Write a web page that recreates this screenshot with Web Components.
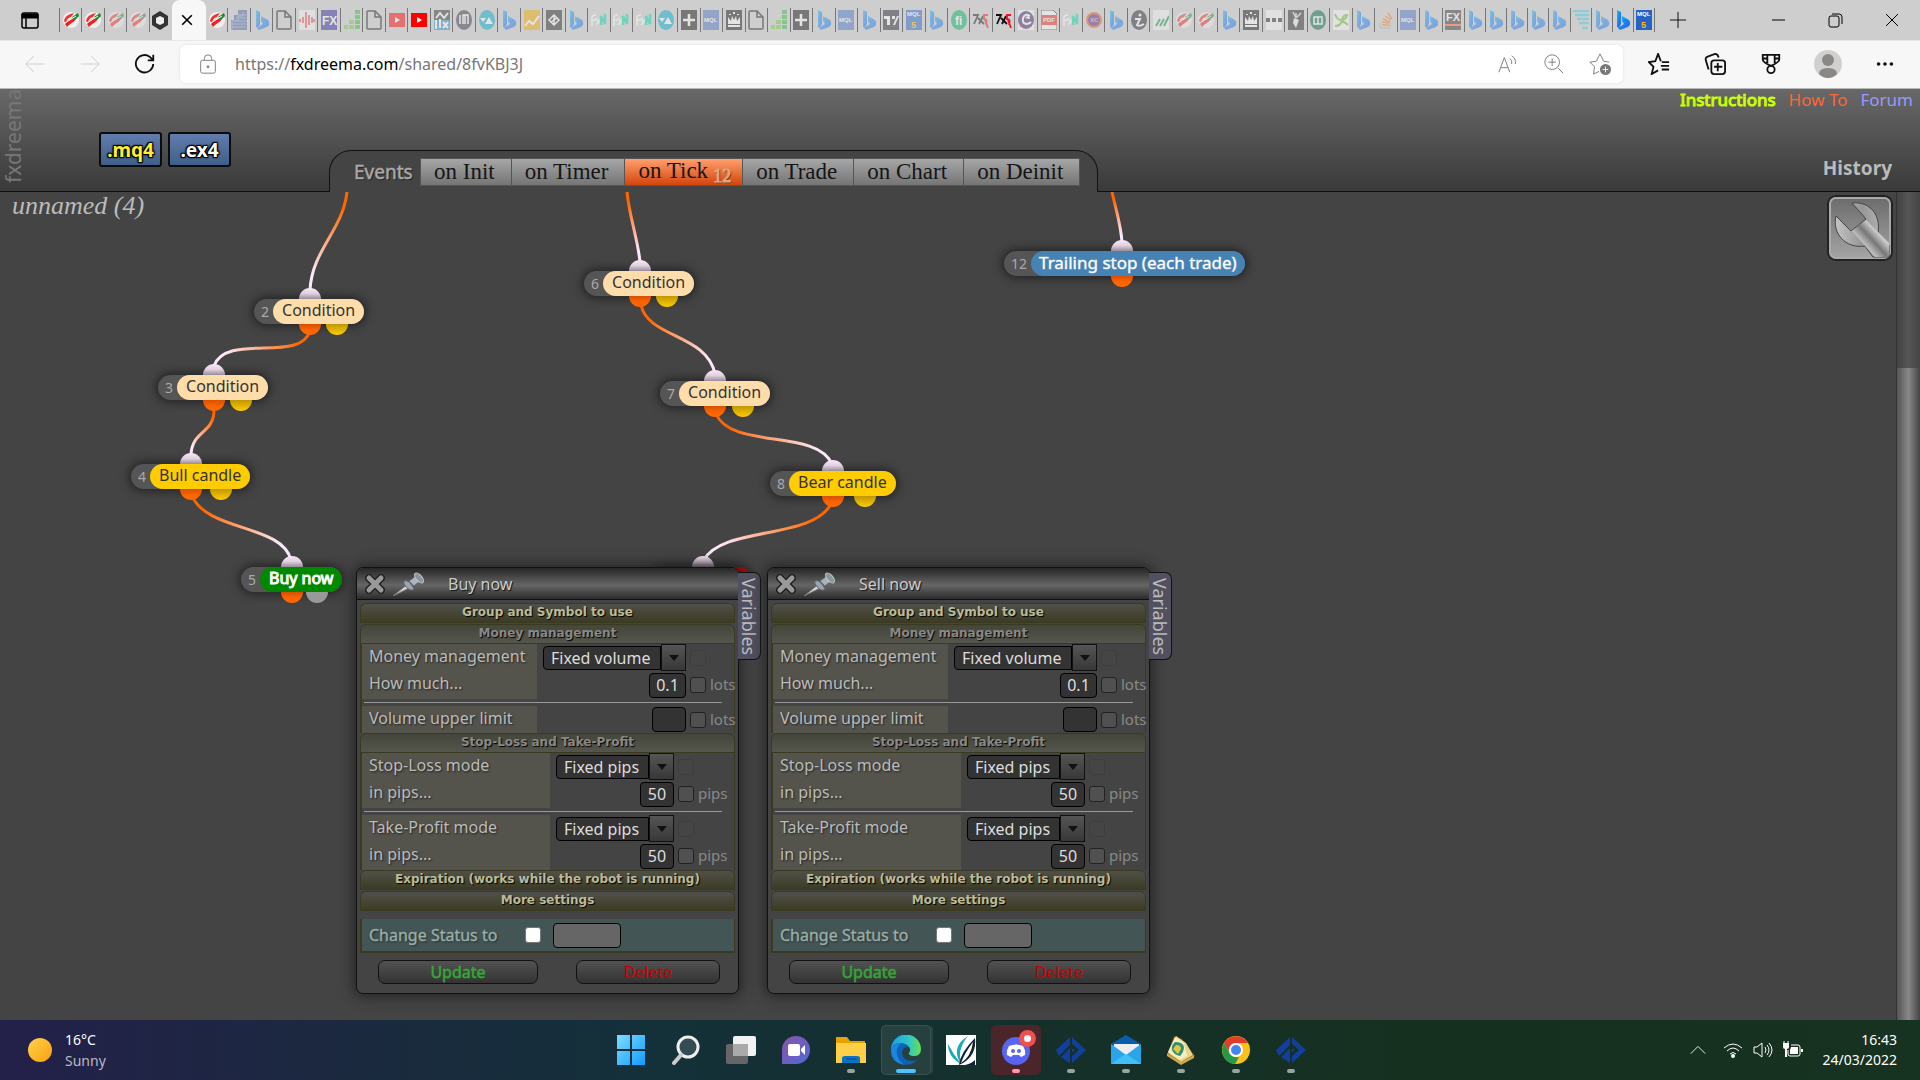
<!DOCTYPE html>
<html lang="en">
<head>
<meta charset="utf-8">
<title>fxDreema</title>
<style>
html, body { margin: 0; height: 100%; }
body { display: flex; flex-direction: column; overflow: hidden; background: #444; color: #aaa; font-family: "Noto Sans", "Open Sans", sans-serif; font-size: 16px; }
event-canvas { flex: 1; min-height: 0; }
</style>
</head>
<body>
<browser-tabs></browser-tabs>
<browser-toolbar></browser-toolbar>
<app-header></app-header>
<event-canvas>
  <flow-wires></flow-wires>
  <flow-node num="2" x="254" y="107" kind="condition" port="45" port2="72">Condition</flow-node>
  <flow-node num="3" x="158" y="183" kind="condition" port="45" port2="72">Condition</flow-node>
  <flow-node num="4" x="131" y="272" kind="candle" port="49" port2="79">Bull candle</flow-node>
  <flow-node num="5" x="241" y="375" kind="buy" port="40" port2="65">Buy now</flow-node>
  <flow-node num="6" x="584" y="79" kind="condition" port="45" port2="72">Condition</flow-node>
  <flow-node num="7" x="660" y="189" kind="condition" port="44" port2="72">Condition</flow-node>
  <flow-node num="8" x="770" y="279" kind="candle" port="52" port2="84">Bear candle</flow-node>
  <flow-node num="9" x="652" y="375" kind="sell" port="40" port2="65">Sell now</flow-node>
  <flow-node num="12" x="1004" y="59" kind="trail" port="107">Trailing stop (each trade)</flow-node>
  <block-panel x="356" y="375">Buy now</block-panel>
  <block-panel x="767" y="375">Sell now</block-panel>
</event-canvas>
<task-bar></task-bar>

<script>
function component(name, html, setup) {
  const template = document.createElement('template');
  template.innerHTML = html;
  customElements.define(name, class extends HTMLElement {
    constructor() {
      super();
      this.attachShadow({ mode: 'open' }).append(template.content.cloneNode(true));
    }
    connectedCallback() { if (setup) setup(this, this.shadowRoot); }
  });
}

/* ---------- favicons, drawn in a 16x20 box ---------- */
const square = (fill, inner = '') => `<path fill="${fill}" d="M0 0h16v20H0z"/>${inner}`;
const word = (t, x, y, size, fill) => `<text x="${x}" y="${y}" font-size="${size}" fill="${fill}" font-weight="700">${t}</text>`;
const favicons = {
  dreema: `<ellipse cx="8" cy="10" rx="8" ry="8" fill="#eee"/><path d="M1 11C2 6 6 4 11 3L8 7C5 8 4 9 3 13z" fill="#e33"/><path d="M2 14c2-4 5-4 9-7l2 1c-1 4-4 4-9 9z" fill="#e22"/><path d="M9 7l6-4 1 3-4 4z" fill="#283"/><path d="M2 13L13 6" stroke="#fff"/>`,
  hex: `<path d="M8 1l8 5v9l-8 5-8-5V6z" fill="#333"/><path d="M8 6l4 2v5l-4 2-4-2V8z" fill="#eee"/>`,
  building: square('#4a63a8', '<path d="M0 0h7v5H3v5H0z" fill="#cecece"/><path d="M1 20V11h6V6h5V2M1 14h14M1 17h14M5 8h10M7 5h8M4 11h12" stroke="#93a3d0" stroke-width="1" fill="none"/>'),
  bing: `<defs><linearGradient id="b" x2="1" y2="1"><stop stop-color="#1cc4f5"/><stop offset=".5" stop-color="#1783f0"/><stop offset="1" stop-color="#2a66e8"/></linearGradient></defs><path fill="url(#b)" d="M2 0l4 2v12l-2 4-2-1z"/><path fill="url(#b)" d="M7 6l7 4q2 2 1 5l-2 2-8 3-2-2 6-4-2-3z"/>`,
  doc: `<path d="M1 2q0-1 1-1h7l6 6v11q0 1-1 1H2q-1 0-1-1zM9 1v6h6" fill="none" stroke="#111" stroke-width="1.500"/>`,
  wave: square('#f4f4f4', '<path d="M1 9v3M4 7v6M7 2v16M10 5v10M13 7v6M15 9v3" stroke="#e22" stroke-width="1.500"/>'),
  fx: square('#2a2a9c', word('FX', 1, 15, 12, '#fff')),
  bars: `<path d="M0 15h4v4H0zM5 15h5v4H5zM5 10h5v4H5z" fill="#7c4"/><path d="M11 0h5v4h-5zM11 5h5v4h-5zM11 10h5v4h-5zM11 15h5v4h-5z" fill="#3b4"/>`,
  yt: `<path fill="#f00" d="M0 3h16v14H0z"/><path d="M6 7l5 3-5 3z" fill="#fff"/>`,
  cpx: square('#333', '<path d="M0 10h16v10H0z" fill="#28c"/><path d="M2 10v9M6 9v9M9 12l5 6M14 12l-5 6M2 8l4-5 4 5 4-5" stroke="#fff" stroke-width="2" fill="none"/>'),
  im: `<ellipse cx="8" cy="10" rx="8" ry="10" fill="#334"/><path d="M4 5v9M7 14V5h5v9M9 5v9" stroke="#fff" stroke-width="1.500" fill="none"/>`,
  tri: `<ellipse cx="8" cy="10" rx="8" ry="10" fill="#0ac"/><path d="M1 8h6l-3 4zM6 14l4-7 4 7z" fill="#fff"/>`,
  chart: square('#f3a800', '<path d="M1 16l4-5 4 3 6-8" stroke="#fff" stroke-width="2" fill="none"/>'),
  diamond: square('#222', '<path d="M8 5l5 5-5 5-5-5zM8 5v5l-3 2M8 15v-5l3-2" stroke="#fff" stroke-width="1.500" fill="none"/>'),
  fxn: `<path d="M1 16V8q0-3 4-3M0 10h5M5 8l5 7M10 8l-5 7" stroke="#fff" stroke-width="1.500" fill="none"/><path d="M10 15V6l4 8V4" stroke="#0da" stroke-width="2.500" fill="none"/>`,
  plus: square('#111', '<path d="M8 4v12M2 10h12" stroke="#fff" stroke-width="2.500"/>'),
  mql: square('#4a72c4', word('MQL', 1, 12, 6, '#fff')),
  crown: square('#111', '<path d="M2 14V7l3 4 1-5 2 4 2-4 1 5 3-4v7z" fill="#fff"/><path d="M2 16h12M4 4v1M8 2v2M12 4v1" stroke="#fff" stroke-width="2"/>'),
  tv: square('#223', '<path d="M1 6h6v9H4V9H1zM9 6h3v3H9zM16 6l-4 9h-2l4-9z" fill="#fff"/>'),
  mq5: square('#2563c9', word('MQL', 1, 6, 6, '#fff') + word('5', 5, 18, 9, '#fb0')),
  fi: `<ellipse cx="8" cy="10" rx="8" ry="10" fill="#00b060"/>${word('fi', 4, 15, 12, '#fff')}`,
  seven: `<path d="M0 5h5L1 14M5 8l6 6M10 6l-4 8" stroke="#111" stroke-width="1.800" fill="none"/><path d="M15 5h-4v4q4 0 2 6M12 10l3 8" stroke="#e12" stroke-width="1.800" fill="none"/>`,
  cee: square('#fafafa', '<ellipse cx="8" cy="10" rx="8" ry="9" fill="#426"/><path d="M12 6q-5-3-7 2-1 5 3 6 3 0 5-2M8 8q3-2 3 1" stroke="#fff" stroke-width="2" fill="none"/>'),
  pdf: `<path d="M0 0h12l4 4v16H0z" fill="#fff" stroke="#222"/><path d="M0 5h16v10H0z" fill="#e22"/>${word('PDF', 2, 12, 6, '#fff')}`,
  xc: `<circle cx="8" cy="10" r="8" fill="#e8590c"/><circle cx="8" cy="10" r="6" fill="#528"/>${word('XC', 4, 12, 6, '#f9a')}`,
  info: `<ellipse cx="8" cy="10" rx="8" ry="10" fill="#223"/><path d="M4 9h5l-3 6q2 2 7-1" stroke="#fff" stroke-width="2" fill="none"/><circle cx="9" cy="5" r="1.500" fill="#fff"/>`,
  slashes: square('#f4f4f4', '<path d="M3 16l4-7M7 16l4-7M11 16l5-10" stroke="#194" stroke-width="2"/>'),
  dots: square('#fafafa', '<path d="M0 8h4v4H0zM6 8h4v4H6zM12 8h4v4h-4z" fill="#222"/>'),
  carrot: square('#222', '<path d="M6 8l5 2-3 8-3-5z" fill="#eee"/><path d="M8 8L5 2M8 8l5-5M8 7V3" stroke="#cde" stroke-width="1.500"/>'),
  excel: `<ellipse cx="8" cy="10" rx="8" ry="10" fill="#064"/><path d="M4 7h8v7H4zM8 7v7" stroke="#fff" stroke-width="1.500" fill="none"/>`,
  plant: square('#fafafa', '<path d="M2 4q2 6 6 6 5 0 6-5-4 0-5 5-1 6-7 6M8 11q4 1 7 4" stroke="#7b3" stroke-width="2" fill="none"/>'),
  stack: `<path d="M2 13v5h10v-5" stroke="#aaa" fill="none"/><path d="M4 15h7M4 12l7 1M5 9l7 3M7 6l6 4M10 3l4 6" stroke="#f48024" stroke-width="1.500"/>`,
  fxlib: square('#333', word('FX', 1, 11, 11, '#fff') + '<path d="M0 15h16" stroke="#f62" stroke-width="2"/>'),
  lines: `<path d="M0 1h16M2 5h14M4 9h12M6 13h10M9 18h6" stroke="#4cd" stroke-width="2.500"/>`
};
component('fav-tab', `<style>
:host { flex: 1 1 0; min-width: 0; display: flex; align-items: center; justify-content: center; height: 24px; margin-top: 8px; border-right: 1px solid #777; box-sizing: border-box; }
svg { width: 16px; height: 20px; overflow: hidden; opacity: .45; font-family: "Liberation Sans", sans-serif; }
:host([awake]) svg { opacity: 1; }
</style><svg viewBox="0 0 16 20" aria-hidden="true"></svg>`, (el, root) => {
  root.querySelector('svg').innerHTML = favicons[el.getAttribute('icon')] || '';
});

/* ---------- interface icons ---------- */
const icons = {
  actions: ['0 0 20 20', '<rect x="2" y="3" width="16" height="15" rx="2" fill="none" stroke="#000" stroke-width="1.500"/><path d="M2 4h16v4H2z"/><path d="M6 8v10" stroke="#000" stroke-width="1.500"/>'],
  cross: ['0 0 20 20', '<path d="M4 4l12 12M16 4L4 16"/>'],
  plus: ['0 0 20 20', '<path d="M10 1v18M1 10h18"/>'],
  min: ['0 0 20 20', '<path d="M4 10h13"/>'],
  restore: ['0 0 20 20', '<rect x="4" y="6" width="10" height="11" rx="2"/><path d="M7 4h7q3 0 3 3v7"/>'],
  back: ['0 0 24 24', '<path d="M22 12H2M11 3l-9 9 9 9"/>'],
  forward: ['0 0 24 24', '<path d="M2 12h20M13 3l9 9-9 9"/>'],
  reload: ['0 0 24 24', '<path d="M21 12a9.500 9.500 0 1 1-4-8l3 3M21 2v6h-6"/>'],
  lock: ['0 0 24 24', '<rect x="4" y="8" width="16" height="14" rx="2"/><path d="M8 8V6q0-4 4-4t4 4v2"/><circle cx="12" cy="15" r="1" fill="currentColor"/>'],
  read: ['0 0 24 24', '<path d="M2 21L8 5l6 16M4 16h8M14 6q3 2 2 6M16 3q5 3 4 9"/>'],
  zoom: ['0 0 24 24', '<circle cx="10" cy="10" r="8"/><path d="M16 16l6 6M10 6v8M6 10h8"/>'],
  starplus: ['0 0 24 24', '<path d="M11 20l-6 3 1-8-5-5 7-1 4-8 4 8 6 1"/><circle cx="18" cy="18" r="6" fill="currentColor" stroke="none"/><path d="M18 15v6M15 18h6" stroke="#fff"/>'],
  fav: ['0 0 24 24', '<path d="M14 9L11 1 8 9l-7 1 5 5-2 8 7-4M15 10h8M14 14h9M15 18h8"/>'],
  collect: ['0 0 24 24', '<rect x="8" y="8" width="15" height="15" rx="3"/><path d="M15 11v9M11 15h9M5 18L2 8q-1-3 2-4l8-3q3 0 4 4"/>'],
  medal: ['0 0 24 24', '<path d="M3 2h18v5q0 3-9 7-9-4-9-7zM8 2v9M16 2v9M3 6h5M16 6h5"/><circle cx="12" cy="18" r="4"/>'],
  avatar: ['0 0 28 28', '<g stroke="none"><circle cx="14" cy="14" r="14" fill="#d2d0ce"/><circle cx="14" cy="10" r="6" fill="#8a8886"/><path d="M5 24q0-6 9-6t9 6q-4 4-9 4t-9-4z" fill="#8a8886"/></g>'],
  more: ['0 0 24 24', '<g fill="currentColor" stroke="none"><circle cx="5" cy="12" r="2"/><circle cx="12" cy="12" r="2"/><circle cx="19" cy="12" r="2"/></g>'],
  wrench: ['0 0 66 66', `<defs><linearGradient id="bg" y2="1" x2="0"><stop stop-color="#6c6c6c"/><stop offset="1" stop-color="#a4a4a4"/></linearGradient><linearGradient id="w" x2="1"><stop stop-color="#c4c4c4"/><stop offset=".5" stop-color="#969696"/><stop offset="1" stop-color="#bdbdbd"/></linearGradient><linearGradient id="h" gradientUnits="userSpaceOnUse" x1="37" y1="49" x2="50" y2="37"><stop stop-color="#c0c0c0"/><stop offset=".5" stop-color="#777"/><stop offset="1" stop-color="#ccc"/></linearGradient></defs><rect x="1" y="1" width="64" height="64" rx="8" fill="#666" stroke="#222" stroke-width="2"/><rect x="3" y="3" width="60" height="60" rx="6" fill="url(#bg)" stroke="#aaa" stroke-width="2"/><path d="M25 8C43 6 54 20 51 38L62 50V62H46L38 51C18 54 5 38 9 21L24 36 39 24z" fill="url(#w)" stroke="#444"/><path d="M25 36L39 25 62 48V60L58 62H48z" fill="url(#h)" stroke="none"/>`],
  close: ['0 0 20 20', '<path d="M4 4l12 12M16 4L4 16" stroke="#222" stroke-width="8" stroke-linecap="round"/><path d="M4 4l12 12M16 4L4 16" stroke="#999" stroke-width="5" stroke-linecap="round"/>'],
  pin: ['0 0 32 24', '<path d="M1 24L16 12l3 3z" fill="#ddd" stroke="#777"/><path d="M12 9q5-2 10 8-3 3-8-2-3-4-2-6z" fill="#9aa5ad" stroke="#667"/><path d="M17 9l7-5 4 5-6 5z" fill="#aab3ba" stroke="#667"/><ellipse cx="27" cy="6" rx="3" ry="6" transform="rotate(-40 27 6)" fill="#8b969e" stroke="#bcc"/>'],
  windows: ['0 0 30 30', '<defs><linearGradient id="g" x2="1" y2="1"><stop stop-color="#7fdcff"/><stop offset="1" stop-color="#0f9cff"/></linearGradient></defs><path stroke="none" fill="url(#g)" d="M1 0h13v14H1zM16 0h13v14H16zM1 16h13v14H1zM16 16h13v14H16z"/>'],
  search: ['0 0 30 30', '<circle cx="17" cy="12" r="10" fill="#ffffff22" stroke="#eee" stroke-width="3"/><path d="M10 20l-7 8" stroke="#ccc" stroke-width="4" stroke-linecap="round"/>'],
  tasks: ['0 0 30 30', '<g stroke="none"><rect x="7" y="1" width="23" height="20" rx="2" fill="#f2f2f2"/><rect x="0" y="9" width="22" height="20" rx="2" fill="#666"/><path d="M7 9h15v12H7z" fill="#aaa"/></g>'],
  chat: ['0 0 30 30', '<defs><linearGradient id="g" x2="1" y2="1"><stop stop-color="#8a52a8"/><stop offset="1" stop-color="#4f6bd8"/></linearGradient></defs><g stroke="none"><path d="M1 29V15a14 14 0 1 1 14 14z" fill="url(#g)"/><rect x="7" y="9" width="12" height="12" rx="2" fill="#fff"/><path d="M20 14l4-4v10l-4-4z" fill="#fff"/></g>'],
  folder: ['0 0 30 30', '<g stroke="none"><path d="M0 2h11l3 4h15v8H0z" fill="#e8a200"/><path d="M0 8h30v20H0z" fill="#ffcf48"/><path d="M6 28v-5q0-2 3-2h12q3 0 3 2v5z" fill="#0b73c4"/><path d="M10 24h11" stroke="#034a8a" stroke-width="1"/></g>'],
  edge: ['0 0 30 30', '<defs><linearGradient id="g" x2="1"><stop stop-color="#1a9fe0"/><stop offset=".6" stop-color="#2fc6c8"/><stop offset="1" stop-color="#69e04a"/></linearGradient></defs><g stroke="none"><path d="M0 15a15 15 0 0 1 30-1q0 8-9 7-4-1-3-3 3-4-2-8Q6 6 0 15z" fill="url(#g)"/><path d="M0 15Q2 7 11 8q5 1 6 4-6 0-6 6 1 8 10 8 4 0 6-2Q20 32 10 29 0 25 0 15z" fill="#0c62b8"/><path d="M0 15q1-8 11-7-7 4-5 12 2 7 8 10Q0 28 0 15z" fill="#1a86dd"/></g>'],
  quill: ['0 0 30 30', '<g stroke="none"><path d="M0 0h30v30H0z" fill="#fff"/><path d="M2 9q0 13 13 20Q7 19 2 9z" fill="#1ab"/><path d="M22 1Q4 12 15 29 11 14 22 1z" fill="#19a9b8"/><path d="M29 3Q14 18 13 30 31 22 29 3z" fill="#123"/><path d="M27 7q-9 12-12 21 10-6 12-21z" fill="#fff"/><path d="M29 25q-4 4-10 5h10z" fill="#123"/></g>'],
  discord: ['0 0 30 30', '<g stroke="none"><circle cx="15" cy="16" r="14" fill="#5865f2"/><path d="M8 11q7-3 14 0 3 5 2 9l-4 2-2-2h-6l-2 2-4-2q-1-4 2-9z" fill="#fff"/><circle cx="12" cy="16" r="2" fill="#5865f2"/><circle cx="18" cy="16" r="2" fill="#5865f2"/></g>'],
  blade: ['0 0 30 30', '<g stroke="none" fill="#123f9c"><path d="M14 2v8l-6 6-5 5-3-6z"/><path d="M5 22l9-9v15z"/><path d="M16 2l14 13-14 13v-7l7-6-7-6z"/><path d="M16 14h3l-3 4z"/></g>'],
  mail: ['0 0 30 30', '<g stroke="none"><path d="M0 9L15 0l15 9v5H0z" fill="#0a5da8"/><path d="M3 9h25v12H3z" fill="#eee"/><path d="M0 9l15 11L30 9v20H0z" fill="#2aa5ea"/><path d="M0 29l15-10 15 10z" fill="#41c0f5"/></g>'],
  book: ['0 0 30 30', '<g stroke="none"><path d="M8 1l8 3 13 17-13 8L1 20z" fill="#7a5a18"/><path d="M10 1l10 7 7 12-12 7L2 18z" fill="#e8d38a"/><path d="M9 2l9 6 3 13-7 4L2 17z" fill="#f8edc0"/><path d="M9 7q8 0 9 5 0 5-4 9-6-1-8-6-1-5 3-8z" fill="#2f8f77"/><path d="M10 10q5 0 5 4l-3 5-5-5z" fill="#e7c63a"/><path d="M1 18l14 9 13-7v3l-13 7L1 21z" fill="#d0a848"/></g>'],
  chrome: ['0 0 30 30', '<g stroke="none"><circle cx="15" cy="15" r="14" fill="#fbc116"/><path d="M3 8a14 14 0 0 1 24 0H15a7 7 0 0 0-6 11z" fill="#e33b2e"/><path d="M3 8l6 11q3 4 9 3l-4 7A14 14 0 0 1 3 8z" fill="#219b4b"/><circle cx="15" cy="15" r="7" fill="#fff"/><circle cx="15" cy="15" r="5" fill="#4285f4"/></g>'],
  sun: ['0 0 30 30', '<defs><linearGradient id="g" x2="1" y2="1"><stop stop-color="#ffd24a"/><stop offset="1" stop-color="#f8a10d"/></linearGradient></defs><circle cx="15" cy="15" r="12" fill="url(#g)" stroke="none"/>'],
  up: ['0 0 20 20', '<path d="M2 14l8-8 8 8"/>'],
  wifi: ['0 0 20 20', '<path d="M1 8q9-8 18 0M4 11q6-6 12 0M7 14q3-3 6 0"/><circle cx="10" cy="16" r="2" fill="currentColor" stroke="none"/>'],
  sound: ['0 0 20 20', '<path d="M1 7h3l5-4v14l-5-4H1zM12 7q2 3 0 6M14 5q4 5 0 10M16 3q6 7 0 14"/>'],
  battery: ['0 0 20 20', '<path d="M8 5h7q2 0 2 2v7q0 2-2 2H7q-2 0-2-2v-4"/><path d="M8 7h7v7H7v-4zM18 9h2v3h-2zM0 3h6v4q0 2-2 2v8H2V9Q0 9 0 7z" fill="currentColor" stroke="none"/><path d="M1 1v3M5 1v3"/>']
};
component('ui-icon', `<style>
:host { display: inline-flex; flex: none; }
svg { width: var(--size, 20px); height: var(--size, 20px); fill: none; stroke: currentColor; stroke-width: var(--stroke, 1px); }
:host([name="actions"]) svg { fill: #000; }
:host([name="pin"]) svg { width: 32px; height: 24px; }
</style><svg aria-hidden="true"></svg>`, (el, root) => {
  const [box, body] = icons[el.getAttribute('name')];
  const svg = root.querySelector('svg');
  svg.setAttribute('viewBox', box);
  svg.innerHTML = body;
});

const tabs = list => list.trim().split(/\s+/).map(n => n.startsWith('!') ? `<fav-tab awake icon="${n.slice(1)}"></fav-tab>` : `<fav-tab icon="${n}"></fav-tab>`).join('');

component('browser-tabs', `<style>
:host { display: flex; flex: none; height: 40px; background: #cecece; color: #000; }
button { border: 0; padding: 0; background: none; color: inherit; display: flex; align-items: center; justify-content: center; }
.actions { width: 59px; border: 0; }
.lead { display: flex; width: 113px; }
.lead::before { content: ""; width: 1px; height: 24px; margin-top: 8px; background: #777; }
.lead fav-tab:last-child { border-color: transparent; }
.active { width: 34px; padding-right: 4px; background: #f7f7f7; border-radius: 8px 8px 0 0; --size: 16px; --stroke: 2px; }
.rest { display: flex; flex: 1258; }
.tail { display: flex; flex: 190; }
.new { width: 46px; --size: 18px; }
.win { width: 57px; }
.gap { width: 48px; }
</style>
<button class="actions" aria-label="Tab actions"><ui-icon name="actions"></ui-icon></button>
<div class="lead">${tabs('!dreema !dreema dreema dreema !hex')}</div>
<button class="active" aria-label="Close tab"><ui-icon name="cross"></ui-icon></button>
<div class="rest">${tabs('!dreema building bing doc wave fx bars doc yt !yt cpx im tri bing chart diamond bing fxn fxn fxn tri plus mql crown doc bars plus bing mql bing tv mq5 bing fi seven !seven cee pdf fxn xc bing info slashes dreema dreema bing crown dots carrot excel plant bing stack mql bing fxlib')}</div>
<div class="tail">${tabs('bing bing bing bing bing lines bing !bing !mq5')}</div>
<button class="new" aria-label="New tab"><ui-icon name="plus"></ui-icon></button>
<span class="gap"></span>
<button class="win" aria-label="Minimize"><ui-icon name="min"></ui-icon></button>
<button class="win" aria-label="Restore"><ui-icon name="restore"></ui-icon></button>
<button class="win" aria-label="Close"><ui-icon name="cross"></ui-icon></button>`);

component('browser-toolbar', `<style>
:host { display: flex; flex: none; height: 48px; box-sizing: border-box; align-items: center; background: #f7f7f7; box-shadow: inset 0 1px #e8e8e8; color: #111; font-family: "Noto Sans", sans-serif; }
button { border: 0; padding: 0; background: none; color: inherit; display: flex; align-items: center; justify-content: center; width: 55px; --size: 22px; }
button:disabled { color: #ccc; }
nav { display: flex; padding-left: 7px; width: 173px; }
.reload { --stroke: 2px; }
.bar { flex: 1; height: 38px; display: flex; align-items: center; background: #fff; border-radius: 6px; color: #777; box-shadow: 0 0 3px #ddd; }
.bar button { width: 46px; }
.bar .lock { width: 55px; }
.url { flex: 1; font-size: 16px; }
.url b { font-weight: 400; color: #000; }
.tools { display: flex; padding: 0 7px 0 8px; --stroke: 2px; }
.tools button { width: 56px; }
.tools .me { --size: 28px; width: 58px; }
</style>
<nav><button disabled aria-label="Back"><ui-icon name="back"></ui-icon></button><button disabled aria-label="Forward"><ui-icon name="forward"></ui-icon></button><button class="reload" aria-label="Refresh"><ui-icon name="reload"></ui-icon></button></nav>
<div class="bar"><button class="lock" aria-label="Site information"><ui-icon name="lock"></ui-icon></button>
<div class="url">https://<b>fxdreema.com</b>/shared/8fvKBJ3J</div>
<button aria-label="Read aloud"><ui-icon name="read"></ui-icon></button><button aria-label="Zoom"><ui-icon name="zoom"></ui-icon></button><button aria-label="Add to favourites"><ui-icon name="starplus"></ui-icon></button></div>
<div class="tools"><button aria-label="Favourites"><ui-icon name="fav"></ui-icon></button><button aria-label="Collections"><ui-icon name="collect"></ui-icon></button><button aria-label="Rewards"><ui-icon name="medal"></ui-icon></button><button class="me" aria-label="Profile"><ui-icon name="avatar"></ui-icon></button><button aria-label="Settings"><ui-icon name="more"></ui-icon></button></div>`);

/* ---------- application header ---------- */
component('app-header', `<style>
:host { display: flex; flex: none; height: 104px; box-sizing: border-box; align-items: flex-end; background: linear-gradient(#686868, #3a3a3a); border-top: 1px solid #b8b8b8; border-bottom: 1px solid #111; }
.brand { writing-mode: vertical-rl; rotate: 180deg; width: 26px; height: 100%; box-sizing: border-box; line-height: 26px; padding-top: 8px; font-size: 21px; color: #777; }
.files { display: flex; gap: 6px; margin: 0 98px 24px 73px; }
.files button { width: 63px; height: 35px; padding: 0; border: 2px solid #0c0c0c; border-radius: 3px; background: linear-gradient(#627cae, #3f5f88); color: #fff; font: 700 19px/28px "Noto Sans", sans-serif; text-shadow: 1px 1px 1px #000, -1px -1px 1px #000, 1px -1px 1px #000, -1px 1px 1px #000, 0 0 3px #000; }
.files .mq { color: #fe3; }
.shell { display: flex; align-items: center; height: 42px; box-sizing: border-box; margin-bottom: -1px; padding: 0 17px 0 24px; background: #444; border: 1px solid #111; border-bottom: 0; border-radius: 22px 22px 0 0; }
.shell span { width: 66px; font-size: 19px; text-shadow: 1px 1px 1px #111; -webkit-text-stroke: 1px #aaa8; }
.tabs { display: flex; border: 1px solid #555; }
.tabs button { height: 26px; padding: 0 16px 0 13px; border: 0; border-right: 1px solid #555; background: linear-gradient(#a6a6a6, #757575); color: #151515; font: 23px/24px "Liberation Serif", serif; }
.tabs button:last-child { border-right: 0; }
.tabs .on { padding-right: 11px; background: linear-gradient(#ffa06e, #d4450c); }
sub { margin-left: 5px; font-size: 18px; line-height: 16px; vertical-align: -4px; color: #e0a878; text-shadow: 1px 1px 1px #222; -webkit-text-stroke: 1px #e0a878; }
.right { margin-left: auto; height: 100%; display: flex; flex-direction: column; align-items: flex-end; justify-content: space-between; }
nav { display: flex; gap: 13px; padding-right: 7px; font-size: 17px; line-height: 22px; }
a { color: #f63; text-decoration: none; }
nav a:first-child { color: #cf0; -webkit-text-stroke: 1px #cf0; }
nav a:last-child { color: #99f; }
.history { margin: 0 28px 10px 0; font-size: 19px; font-weight: 700; color: #bbb; }
</style>
<div class="brand">fxdreema</div>
<div class="files"><button class="mq">.mq4</button><button>.ex4</button></div>
<div class="shell"><span>Events</span><div class="tabs"><button>on Init</button><button>on Timer</button><button class="on">on Tick<sub>12</sub></button><button>on Trade</button><button>on Chart</button><button>on Deinit</button></div></div>
<div class="right"><nav><a href="#instructions">Instructions</a><a href="#howto">How To</a><a href="#forum">Forum</a></nav><a class="history" href="#history">History</a></div>`);

/* ---------- canvas ---------- */
component('event-canvas', `<style>
:host { display: flex; position: relative; overflow: hidden; background: #444; }
h1 { margin: 0; padding: 0 0 0 12px; flex: 1; font: italic 26px/28px "Liberation Serif", serif; color: #bbb; }
.tool { align-self: flex-start; margin: 3px 3px 0 0; padding: 0; border: 0; background: none; --size: 66px; display: flex; }
.scroll { width: 24px; box-sizing: border-box; padding-top: 176px; display: flex; border-left: 1px solid #333; background: linear-gradient(90deg, #444, #555 50%, #444); }
.thumb { flex: 1; background: linear-gradient(90deg, #555, #888 50%, #444); }
</style>
<h1>unnamed (4)</h1>
<button class="tool" aria-label="Options"><ui-icon name="wrench"></ui-icon></button>
<div class="scroll"><div class="thumb"></div></div>
<slot></slot>`);

const wires = [
  [347, 0, 343, 38, 312, 58, 310, 98],
  [627, 0, 629, 23, 638, 48, 640, 70],
  [1112, 0, 1116, 18, 1121, 33, 1122, 50],
  [310, 138, 302, 172, 226, 140, 214, 174],
  [214, 218, 214, 242, 192, 238, 191, 263],
  [192, 304, 208, 340, 282, 332, 291, 368],
  [641, 113, 648, 146, 707, 142, 715, 182],
  [716, 222, 732, 258, 816, 236, 832, 272],
  [831, 312, 812, 348, 722, 334, 704, 368]
];
component('flow-wires', `<style>
:host { position: absolute; inset: 0; }
svg { width: 100%; height: 100%; fill: none; stroke-width: 3px; }
</style><svg aria-hidden="true">${wires.map((w, i) => `<linearGradient id="w${i}" gradientUnits="userSpaceOnUse" x1="${w[0]}" y1="${w[1]}" x2="${w[6]}" y2="${w[7]}"><stop offset=".15" stop-color="#ff6600"/><stop offset=".85" stop-color="#fbe9fb"/></linearGradient><path stroke="url(#w${i})" d="M${w[0]} ${w[1]}C${w.slice(2).join(' ')}"/>`).join('')}</svg>`);

component('flow-node', `<style>
:host { position: absolute; display: flex; height: 25px; border-radius: 13px; background: #555; box-shadow: 0 0 10px 2px #222; }
.num { padding: 0 4px 0 7px; font-size: 14px; line-height: 25px; color: #aaa; }
.name { position: relative; padding: 0 9px; border-radius: 13px; line-height: 23px; background: var(--fill); color: var(--ink, #333); -webkit-text-stroke: var(--bold, 0); }
:host([kind="condition"]) { --fill: #fda; }
:host([kind="candle"]) { --fill: #fc0; }
:host([kind="buy"]) { --fill: #080; --ink: #fff; --bold: 1px #fff; --alt: #999; }
:host([kind="sell"]) { --fill: #b00; --ink: #fff; --bold: 1px #fff; --alt: #999; }
:host([kind="trail"]) { --fill: #4682b4; --ink: #fff; --bold: 1px #fff6; font-size: 17px; }
:host([kind="trail"]) .name { padding: 0 8px; }
i { position: absolute; width: 22px; height: 11px; }
.in { bottom: 100%; border-radius: 11px 11px 0 0; background: linear-gradient(#f8e8f8, #e0d0e0 50%, #988c98); }
.out { top: 100%; border-radius: 0 0 11px 11px; background: linear-gradient(#d85000, #f60 60%); }
.alt { background: var(--alt, linear-gradient(#c09800, #fc0)); }
</style><i class="in"></i><i class="out"></i><i class="out alt"></i><span class="num"></span><span class="name"><slot></slot></span>`, (el, root) => {
  el.style.left = el.getAttribute('x') + 'px';
  el.style.top = el.getAttribute('y') + 'px';
  root.querySelector('.num').textContent = el.getAttribute('num');
  const [a, b, c] = root.querySelectorAll('i');
  a.style.left = b.style.left = el.getAttribute('port') + 'px';
  if (el.hasAttribute('port2')) c.style.left = el.getAttribute('port2') + 'px';
  else c.remove();
});

/* ---------- settings panel ---------- */
const pick = (id, text, cls) => `<span class="pick ${cls}"><select id="${id}"><option>${text}</option></select><i></i></span><span class="unit"><input type="checkbox" disabled aria-label="Use variable"></span>`;
const amount = (id, value, unit, cls = '') => `<input class="box ${cls}" id="${id}" value="${value}"><span class="unit"><input type="checkbox" aria-label="Use variable"><span>${unit}</span></span>`;
const row = (id, label, control) => `<div class="row"><label for="${id}">${label}</label><div class="ctl">${control}</div></div>`;
component('block-panel', `<style>
:host { position: absolute; width: 381px; height: 425px; background: #444; border: 1px solid #111; border-radius: 7px; box-shadow: 0 0 14px 2px #222; color: #bbb; }
header { display: flex; align-items: center; height: 31px; padding-left: 8px; border-bottom: 1px solid #111; border-radius: 6px 6px 0 0; background: linear-gradient(#262626, #666 55%, #2c2c2c); --size: 20px; }
header button { padding: 0; border: 0; background: none; display: flex; }
header .pin { margin: 0 24px 0 7px; }
h2 { margin: 0; font-size: 16px; font-weight: 400; line-height: 28px; color: #ccc; text-shadow: 1px 1px 1px #111; }
.body { padding: 3px 3px 0; }
h3 { margin: 0 0 1px; height: 20px; box-sizing: border-box; border: 1px solid #3a3a20; border-radius: 6px 6px 0 0; background: linear-gradient(#50504a, #3c3c24); font: 700 12px/16px "DejaVu Sans", sans-serif; text-align: center; color: #bb9; text-shadow: 1px 1px 1px #000; }
h3.open { margin: 0; background: linear-gradient(#45463a, #54554c); color: #888; }
section { border: 1px solid #3a3a20; border-width: 0 1px 0 2px; --label: 175px; --unit: 48px; }
section.wide { --label: 188px; --unit: 60px; }
.row { display: flex; height: 27px; }
.row + .row { height: 28px; }
hr { margin: 0 12px 0 2px; height: 0; border: 0; border-top: 1px solid #999; padding: 0; }
.rule { padding: 3px 0; }
label { width: var(--label); flex: none; box-sizing: border-box; padding-left: 7px; background: #54544d; line-height: 25px; text-shadow: 1px 1px 2px #222; }
.ctl { flex: 1; display: flex; justify-content: flex-end; align-items: center; }
.unit { width: var(--unit); box-sizing: border-box; padding-left: 4px; display: flex; align-items: center; gap: 4px; font-size: 15px; color: #888; line-height: 24px; }
.unit span { padding-bottom: 2px; }
input[type=checkbox] { appearance: none; flex: none; margin: 0; width: 16px; height: 16px; border: 1px solid #222; border-radius: 3px; background: #505050; }
input:disabled { opacity: .15; }
.box { box-sizing: border-box; width: 34px; height: 25px; padding: 0; border: 1px solid #000; border-radius: 4px; background: #333; color: #ddd; font: 16px "Noto Sans", sans-serif; text-align: center; }
.box.l { width: 37px; }
.pick { display: flex; align-items: center; }
select { appearance: none; box-sizing: border-box; width: 118px; height: 24px; padding: 0 0 0 7px; border: 1px solid #000; border-radius: 4px 0 0 4px; background: #333; color: #ddd; font: 16px/20px "Noto Sans", sans-serif; }
.s select { width: 93px; }
.pick i { width: 25px; height: 27px; box-sizing: border-box; border: 1px solid #111; background: linear-gradient(#555, #383838); display: flex; align-items: center; justify-content: center; pointer-events: none; }
.pick i::before { content: ""; border: 5px solid transparent; border-top: 6px solid #111; border-bottom: 0; }
.status { display: flex; align-items: center; height: 32px; margin-top: 8px; border: 1px solid #3a3a20; border-width: 0 1px 2px 2px; background: #455; }
.status label { width: 163px; background: none; color: #9ab0aa; -webkit-text-stroke: 1px #9ab0aa66; }
.status input[type=checkbox] { background: #fff; border-color: #777; }
.status .box { width: 68px; margin-left: 12px; background: #666; }
footer { display: flex; justify-content: space-between; padding: 7px 15px 0 18px; }
footer button { width: 160px; height: 24px; padding: 0; border: 1px solid #111; border-radius: 7px; background: linear-gradient(#525252, #333); color: #3a3; font: 16px/20px "Noto Sans", sans-serif; -webkit-text-stroke: 1px #3a38; }
footer .del { width: 144px; color: #c00; -webkit-text-stroke: 0; }
.vars { position: absolute; left: 100%; top: 4px; writing-mode: vertical-rl; height: 88px; width: 23px; padding: 2px 0 0; border: 1px solid #111; border-left: 0; border-radius: 0 7px 7px 0; background: #505060; color: #bbb; font: 18px/20px "Noto Sans", sans-serif; text-align: center; }
</style>
<header><button aria-label="Close"><ui-icon name="close"></ui-icon></button><button class="pin" aria-label="Pin"><ui-icon name="pin"></ui-icon></button><h2><slot></slot></h2></header>
<div class="body">
<h3>Group and Symbol to use</h3>
<h3 class="open">Money management</h3>
<section>${row('mm', 'Money management', pick('mm', 'Fixed volume', ''))}${row('much', 'How much...', amount('much', '0.1', 'lots', 'l'))}<div class="rule"><hr></div>${row('upper', 'Volume upper limit', amount('upper', '', 'lots'))}</section>
<h3 class="open">Stop-Loss and Take-Profit</h3>
<section class="wide">${row('sl', 'Stop-Loss mode', pick('sl', 'Fixed pips', 's'))}${row('slp', 'in pips...', amount('slp', '50', 'pips'))}<div class="rule"><hr></div>${row('tp', 'Take-Profit mode', pick('tp', 'Fixed pips', 's'))}${row('tpp', 'in pips...', amount('tpp', '50', 'pips'))}</section>
<h3>Expiration (works while the robot is running)</h3>
<h3>More settings</h3>
<div class="status"><label for="st">Change Status to</label><input type="checkbox" id="st"><input class="box" aria-label="Status"></div>
<footer><button>Update</button><button class="del">Delete</button></footer>
</div>
<button class="vars">Variables</button>`, el => {
  el.style.left = el.getAttribute('x') + 'px';
  el.style.top = el.getAttribute('y') + 'px';
});

/* ---------- taskbar ---------- */
component('task-app', `<style>
:host { display: flex; width: 55px; height: 60px; align-items: center; justify-content: center; }
button { position: relative; width: 50px; height: 50px; box-sizing: border-box; padding: 0; border: 1px solid transparent; border-radius: 5px; background: none; display: flex; align-items: center; justify-content: center; --size: 30px; }
:host([state="active"]) button { background: #ffffff14; border-color: #ffffff18; box-shadow: 3px 0 0 -1px #ffffff18; }
:host([state="alert"]) button { background: #4a262a; }
:host([run]) button::after { content: ""; position: absolute; bottom: 1px; width: 8px; height: 4px; border-radius: 2px; background: #99a3a0; }
:host([state="active"]) button::after { width: 20px; background: #4cc2ff; }
:host([state="alert"]) button::after { background: #ff99a4; }
.badge { display: none; position: absolute; right: 4px; top: 4px; width: 7px; height: 7px; border: 5px solid #f05050; border-radius: 50%; background: #fff; }
:host([state="alert"]) .badge { display: block; }
</style><button><ui-icon name="windows"></ui-icon><span class="badge"></span></button>`, (el, root) => {
  const old = root.querySelector('ui-icon');
  const icon = document.createElement('ui-icon');
  icon.setAttribute('name', el.getAttribute('icon'));
  old.replaceWith(icon);
  root.querySelector('button').setAttribute('aria-label', el.getAttribute('icon'));
});
component('task-bar', `<style>
:host { display: grid; grid-template-columns: 1fr auto 1fr; flex: none; height: 60px; align-items: center; color: #fff; background: linear-gradient(90deg, #23204a, #1a2a3e 20%, #14303a 33%, #15302a 55%, #16301f 75%, #163220); font: 14px/21px "Noto Sans", sans-serif; }
.weather { display: flex; align-items: center; gap: 10px; padding-left: 25px; --size: 30px; }
.weather span { display: block; color: #b8b8c4; }
.weather span:first-child { color: #fff; }
.apps { display: flex; padding-left: 2px; }
.tray { display: flex; justify-content: flex-end; align-items: center; gap: 10px; padding-right: 23px; }
.tray ui-icon:first-child { margin-right: 6px; --size: 18px; }
time { text-align: right; margin-left: 10px; line-height: 20px; }
</style>
<div class="weather"><ui-icon name="sun"></ui-icon><div><span>16°C</span><span>Sunny</span></div></div>
<div class="apps"><task-app icon="windows"></task-app><task-app icon="search"></task-app><task-app icon="tasks"></task-app><task-app icon="chat"></task-app><task-app icon="folder" run></task-app><task-app icon="edge" run state="active"></task-app><task-app icon="quill"></task-app><task-app icon="discord" run state="alert"></task-app><task-app icon="blade" run></task-app><task-app icon="mail" run></task-app><task-app icon="book" run></task-app><task-app icon="chrome" run></task-app><task-app icon="blade" run></task-app></div>
<div class="tray"><ui-icon name="up"></ui-icon><ui-icon name="wifi"></ui-icon><ui-icon name="sound"></ui-icon><ui-icon name="battery"></ui-icon><time>16:43<br>24/03/2022</time></div>`);
</script>
</body>
</html>
